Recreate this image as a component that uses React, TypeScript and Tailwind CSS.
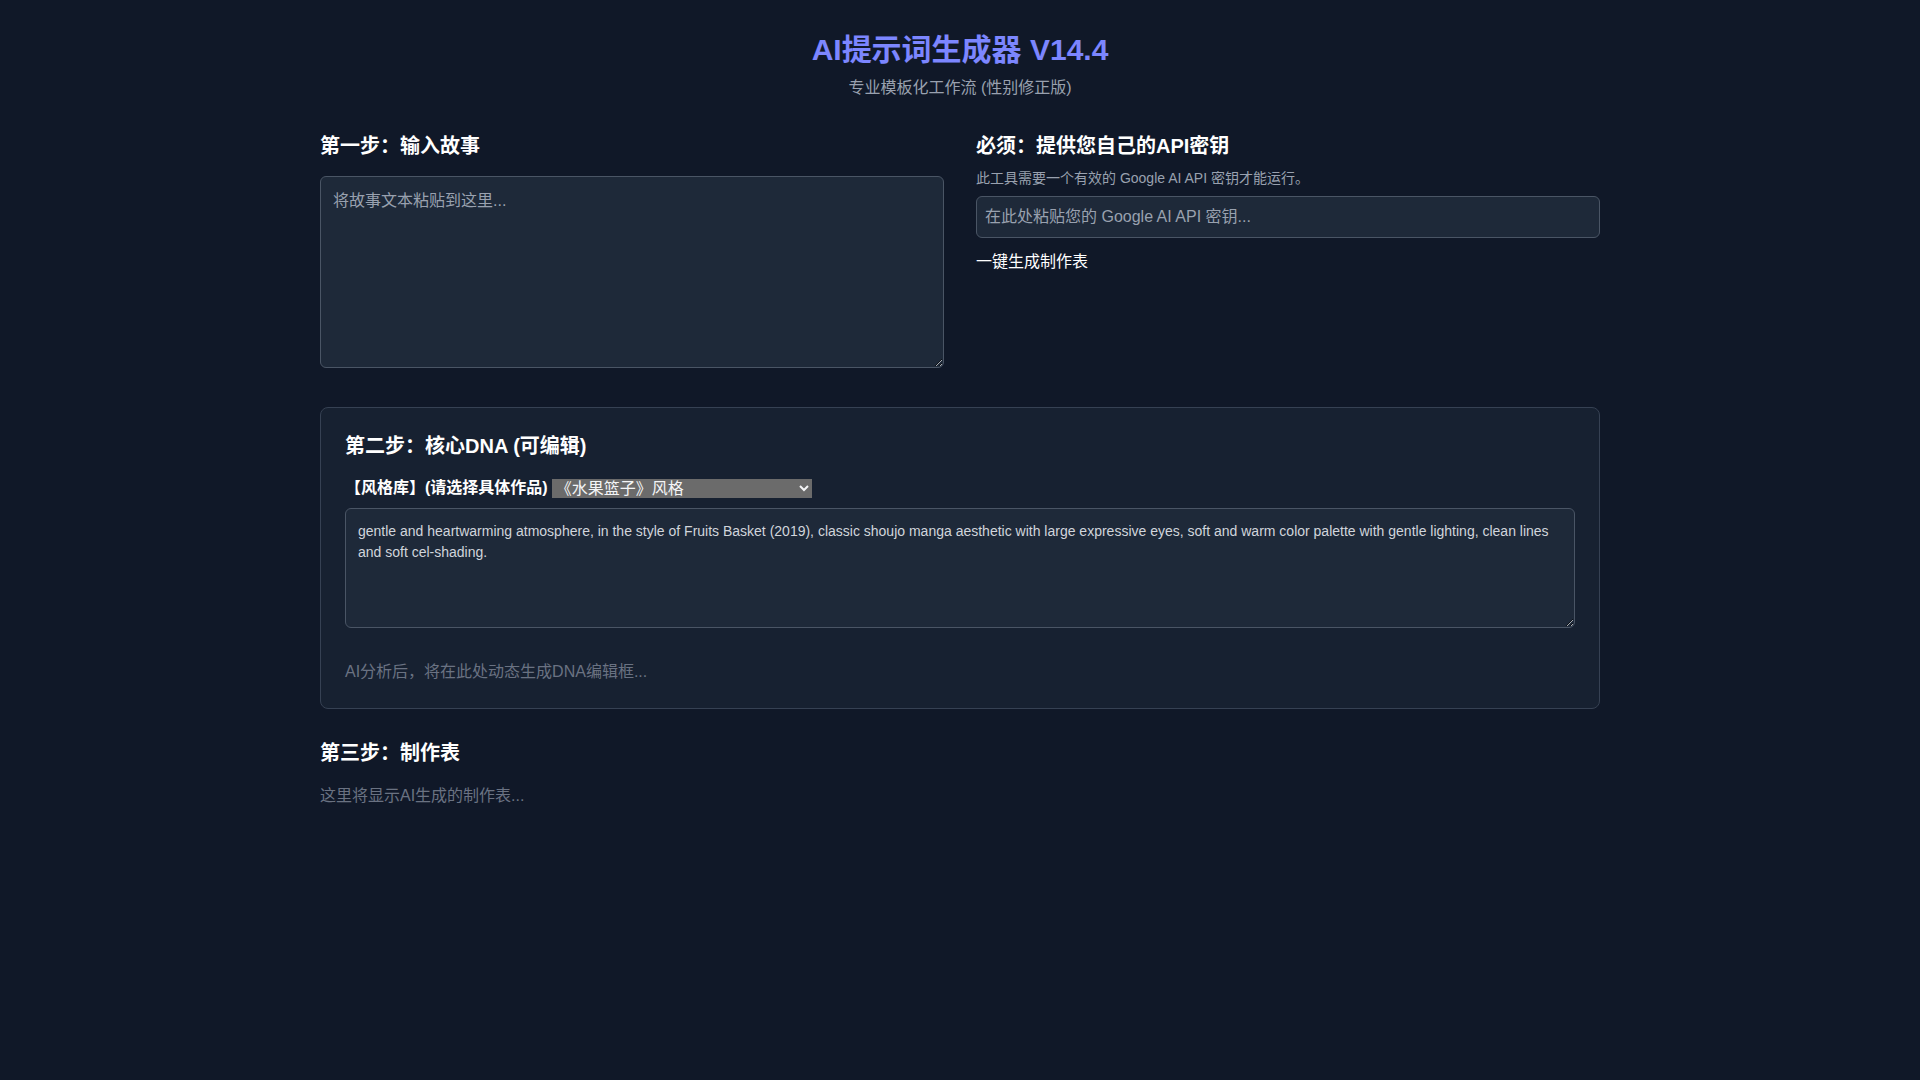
import { useState } from "react";

const dnaDefault =
  "gentle and heartwarming atmosphere, in the style of Fruits Basket (2019), classic shoujo manga aesthetic with large expressive eyes, soft and warm color palette with gentle lighting, clean lines and soft cel-shading.";

export default function App() {
  const [story, setStory] = useState("");
  const [apiKey, setApiKey] = useState("");
  const [style, setStyle] = useState("fruits");
  const [dna, setDna] = useState(dnaDefault);

  return (
    <div className="min-h-screen bg-gray-900 font-['Liberation_Sans','Noto_Sans_CJK_SC',sans-serif] text-gray-200">
      <div className="mx-auto max-w-7xl pt-8 pb-16">
        <header className="mb-8 text-center">
          <h1 className="text-3xl font-bold text-indigo-400">AI提示词生成器 V14.4</h1>
          <p className="mt-2 text-gray-400">专业模板化工作流 (性别修正版)</p>
        </header>

        <div className="grid grid-cols-2 gap-8">
          <section>
            <h2 className="mb-4 text-xl font-bold text-white">第一步：输入故事</h2>
            <textarea
              value={story}
              onChange={(e) => setStory(e.target.value)}
              placeholder="将故事文本粘贴到这里..."
              className="block h-[192px] w-full rounded-md border border-gray-600 bg-gray-800 p-3 text-gray-200 placeholder:text-gray-400 focus:outline-none"
            />
          </section>
          <section>
            <h2 className="mb-2 text-xl font-bold text-white">必须：提供您自己的API密钥</h2>
            <p className="mb-2 text-sm text-gray-400">此工具需要一个有效的 Google AI API 密钥才能运行。</p>
            <input
              value={apiKey}
              onChange={(e) => setApiKey(e.target.value)}
              type="password"
              placeholder="在此处粘贴您的 Google AI API 密钥..."
              className="block w-full rounded-md border border-gray-600 bg-gray-800 p-2 text-gray-200 placeholder:text-gray-400 focus:outline-none"
            />
            <button className="mt-3 text-white">一键生成制作表</button>
          </section>
        </div>

        <section className="mt-[39px] rounded-lg border border-gray-700 bg-gray-800/50 p-6">
          <h2 className="mb-4 text-xl font-bold text-white">第二步：核心DNA (可编辑)</h2>
          <div className="flex items-center">
            <label className="font-bold text-white">【风格库】(请选择具体作品)</label>
            <select
              value={style}
              onChange={(e) => setStyle(e.target.value)}
              className="ml-1 h-[19px] w-[260px] bg-[#6b6b6b] text-gray-100 [color-scheme:dark]"
            >
              <option value="fruits">《水果篮子》风格</option>
              <option value="ghibli">《吉卜力》风格</option>
              <option value="shinkai">《新海诚》风格</option>
            </select>
          </div>
          <textarea
            value={dna}
            onChange={(e) => setDna(e.target.value)}
            className="mt-2 block h-[120px] w-full rounded-md border border-gray-600 bg-gray-800 p-3 text-sm leading-[21px] text-gray-300 focus:outline-none"
          />
          <p className="mt-8 text-gray-500">AI分析后，将在此处动态生成DNA编辑框...</p>
        </section>

        <section className="mt-[30px]">
          <h2 className="mb-[17px] text-xl font-bold text-white">第三步：制作表</h2>
          <p className="text-gray-500">这里将显示AI生成的制作表...</p>
        </section>
      </div>
    </div>
  );
}
